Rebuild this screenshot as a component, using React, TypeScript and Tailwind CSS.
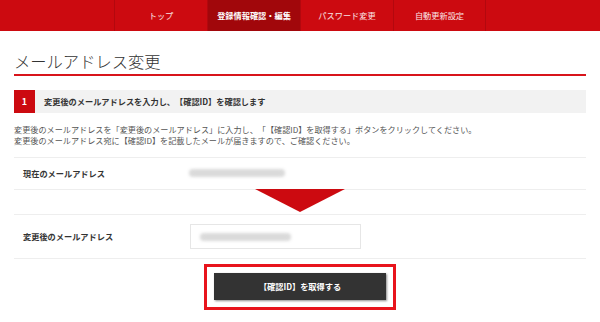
import React from "react";

const navItems = [
  { label: "トップ", active: false },
  { label: "登録情報確認・編集", active: true },
  { label: "パスワード変更", active: false },
  { label: "自動更新設定", active: false },
];

export default function App() {
  return (
    <div
      className="w-[600px] h-[322px] bg-white overflow-hidden text-[#333] [text-spacing-trim:space-all]"
      style={{ fontFamily: '"Noto Sans CJK JP", "Noto Sans", sans-serif' }}
    >
      <nav className="h-[31px] bg-[#cc0a10] flex justify-center">
        {navItems.map((item, i) => (
          <div
            key={item.label}
            className={`w-[93px] h-full flex items-center justify-center border-l border-[#b3080e] text-[8.2px] leading-none ${
              i === navItems.length - 1 ? "border-r" : ""
            } ${item.active ? "bg-[#a1070b] text-white font-bold" : "text-white/90"}`}
          >
            {item.label}
          </div>
        ))}
      </nav>

      <div className="px-[14px]">
        <h1 className="mt-[20px] text-[16.3px] leading-[20px] font-light text-[#333] pb-[3px] border-b-2 border-[#d8141b]">
          メールアドレス変更
        </h1>

        <div className="mt-[14px] h-[23px] flex bg-[#f2f2f2]">
          <div className="w-[21px] h-full bg-[#cc0a10] flex items-center justify-center text-white font-bold text-[9px]">
            1
          </div>
          <div className="pl-[9px] flex items-center text-[8.2px] font-bold text-[#333]">
            変更後のメールアドレスを入力し、【確認ID】を確認します
          </div>
        </div>

        <div className="mt-[11px] mb-[11px] text-[8.15px] leading-[11px] text-[#555]">
          <p>変更後のメールアドレスを「変更後のメールアドレス」に入力し、「【確認ID】を取得する」ボタンをクリックしてください。</p>
          <p>変更後のメールアドレス宛に【確認ID】を記載したメールが届きますので、ご確認ください。</p>
        </div>

        <div className="border-t border-[#eeeeee] h-[33px] flex items-center border-b pb-[1px]">
          <div className="w-[176px] pl-[9px] text-[8.2px] font-bold text-[#333]">現在のメールアドレス</div>
          <div className="ml-[-1px] w-[96px] h-[8px] bg-[#dadada] blur-[1.5px] rounded-sm" />
        </div>

        <div className="h-[24px] flex justify-center">
          <svg width="90" height="23" viewBox="0 0 90 23" className="-mt-[1px]">
            <polygon points="0,0 90,0 45,23" fill="#cc0a10" />
          </svg>
        </div>

        <div className="border-t border-b border-[#eeeeee] h-[45px] flex items-center">
          <div className="w-[176px] pl-[9px] text-[8.2px] font-bold text-[#333]">変更後のメールアドレス</div>
          <div className="w-[171px] h-[25px] border border-[#e6e6e6] flex items-center">
            <div className="ml-[9px] w-[91px] h-[8px] bg-[#dadada] blur-[1.5px] rounded-sm" />
          </div>
        </div>

        <div className="mt-[5px] flex justify-center">
          <div className="w-[192px] h-[46px] border-[3px] border-[#e8141c] pt-[6px] px-[7px]">
            <button className="w-full h-[27px] bg-[#333333] text-white text-[8.2px] font-bold flex items-center justify-center shadow-[1px_1px_2px_rgba(0,0,0,0.45)]">
              【確認ID】を取得する
            </button>
          </div>
        </div>
      </div>
    </div>
  );
}
